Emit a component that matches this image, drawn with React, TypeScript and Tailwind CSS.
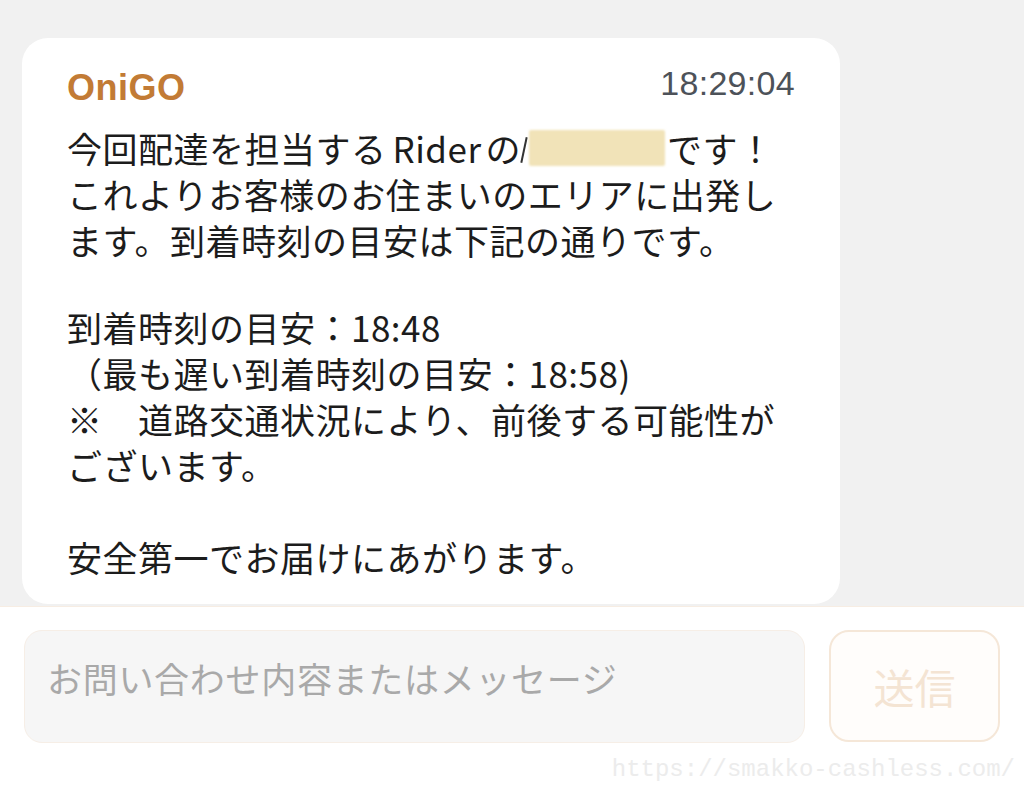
const jp = "font-['Noto_Sans_CJK_JP','Noto_Sans',sans-serif]";

const lines: (string | null)[] = [
  null,
  "これよりお客様のお住まいのエリアに出発し",
  "ます。到着時刻の目安は下記の通りです。",
  "",
  "到着時刻の目安：18:48",
  "（最も遅い到着時刻の目安：18:58)",
  "※　道路交通状況により、前後する可能性が",
  "ございます。",
  "",
  "安全第一でお届けにあがります。",
];

export default function App() {
  return (
    <div className={`w-[1024px] h-[789px] flex flex-col bg-white overflow-hidden ${jp}`}>
      {/* chat area */}
      <div className="h-[606px] bg-[#f1f1f1] pt-[38px] pl-[22px] overflow-hidden">
        <div className="w-[818px] h-[566px] bg-white rounded-[26px] px-[45px] pt-[20px]">
          <div className="flex justify-between items-start h-[67px]">
            <span className="mt-[11px] text-[36px] leading-[38px] font-bold tracking-[0.5px] text-[#c27b35] font-['Liberation_Sans',sans-serif]">
              OniGO
            </span>
            <span className="mt-[6px] text-[34px] leading-[38px] tracking-[0.3px] text-[#4d5259] font-['Liberation_Sans',sans-serif]">
              18:29:04
            </span>
          </div>
          <div className="text-[35px] leading-[46px] tracking-[0.5px] text-[#1c1c1c] whitespace-nowrap">
            {lines.map((l, i) =>
              l === null ? (
                <div key={i} className="flex items-center h-[46px]">
                  <span>今回配達を担当する</span>
                  <span className="ml-[6px] mr-[4px]">Rider</span>
                  <span>の</span>
                  <span className="inline-block w-[2px] h-[26px] bg-[#333] ml-[2px] mt-[4px] rotate-12" />
                  <span className="inline-block w-[136px] h-[36px] bg-[#f1e3b8] ml-[4px] mr-[2px] blur-[1px] rounded-[2px]" />
                  <span>です！</span>
                </div>
              ) : l === "" ? (
                <div key={i} className={i === 3 ? "h-[41px]" : "h-[46px]"} />
              ) : (
                <div key={i} className="h-[46px]">
                  {l}
                </div>
              )
            )}
          </div>
        </div>
      </div>

      {/* input area */}
      <div className="flex-1 border-t border-[#f7ede3] bg-white">
        <div className="flex gap-[24px] pl-[24px] pt-[23px]">
          <div className="w-[781px] h-[113px] rounded-[18px] bg-[#f6f6f6] border border-[#f6eee6] flex items-start pl-[22px] pt-[24px]">
            <span className="text-[35px] leading-[46px] tracking-[0.7px] text-[#a9a9a9]">お問い合わせ内容またはメッセージ</span>
          </div>
          <div className="w-[171px] h-[112px] rounded-[20px] border-2 border-[#f5e7d8] bg-[#fffdfb] flex items-center justify-center">
            <span className="text-[41px] leading-[46px] text-[#f4e4d3]">送信</span>
          </div>
        </div>
        <div className="flex justify-end pr-[9px] mt-[12px]">
          <span className="text-[24px] leading-[30px] text-[#ececec] font-['Liberation_Mono',monospace]">
            https://smakko-cashless.com/
          </span>
        </div>
      </div>
    </div>
  );
}
